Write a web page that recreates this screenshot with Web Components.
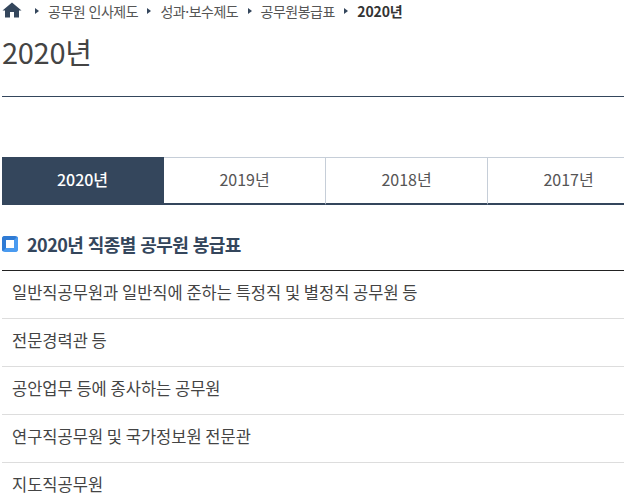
<!DOCTYPE html>
<html lang="ko"><head><meta charset="utf-8"><style>
html,body{margin:0;padding:0;height:494px;overflow:hidden;background:#fff}
body{font-family:"Noto Sans CJK KR","Noto Sans",sans-serif;color:#333;letter-spacing:-0.5px}
</style></head><body>
<pay-page>
<bread-crumbs slot="crumbs"><span>공무원 인사제도</span><span>성과·보수제도</span><span>공무원봉급표</span><span class="cur">2020년</span></bread-crumbs>
<year-tabs><year-tab active>2020년</year-tab><year-tab>2019년</year-tab><year-tab>2018년</year-tab><year-tab>2017년</year-tab></year-tabs>
<section-title>2020년 직종별 공무원 봉급표</section-title>
<link-list><link-row>일반직공무원과 일반직에 준하는 특정직 및 별정직 공무원 등</link-row><link-row>전문경력관 등</link-row><link-row>공안업무 등에 종사하는 공무원</link-row><link-row>연구직공무원 및 국가정보원 전문관</link-row><link-row>지도직공무원</link-row></link-list>
</pay-page>
<script>
function def(name,html){customElements.define(name,class extends HTMLElement{constructor(){super();this.attachShadow({mode:'open'}).innerHTML=html}})}
def('pay-page',`<style>:host{display:block;padding-left:2px;width:624px;box-sizing:border-box}
h1{margin:0;font-size:29px;font-weight:400;line-height:40px;height:65px;padding-top:9px;color:#444;letter-spacing:-.3px}
.top{height:22px}.rule{height:1px;background:#34465c;margin-bottom:60px}
</style><div class="top"><slot name="crumbs"></slot></div><h1>2020년</h1><div class="rule"></div><slot></slot>`);
def('bread-crumbs',`<style>:host{display:flex;align-items:center;height:22px;font-size:14px;color:#555}
svg{display:block;flex:none;margin-top:-2px}.home{margin-right:13px}
::slotted(span){display:flex;align-items:center;margin-right:9.4px}
::slotted(span)::before{content:"";width:0;height:0;border-left:4px solid #34465c;border-top:3px solid transparent;border-bottom:3px solid transparent;margin-right:9px}
::slotted(.cur){font-weight:700;color:#333;margin:0;letter-spacing:-.1px}
</style><svg class="home" width="20" height="16" viewBox="0 0 20 16"><path fill="#34465c" d="M10 .5 L19.5 8.5 L17 8.5 L17 15.5 L12 15.5 L12 10 L8 10 L8 15.5 L3 15.5 L3 8.5 L.5 8.5 Z"/></svg><slot></slot>`);
def('year-tabs',`<style>:host{display:flex;width:648px;height:48px;box-sizing:border-box}</style><slot></slot>`);
customElements.define('year-tab',class extends HTMLElement{constructor(){super();this.attachShadow({mode:'open'}).innerHTML=`<style>:host{display:flex;align-items:center;justify-content:center;flex:0 0 162px;box-sizing:border-box;height:48px;padding-bottom:4px;font-size:16px;color:#555;border:1px solid #c6ced8;border-left:0;border-bottom:2px solid #34465c;letter-spacing:0}
:host([active]){background:#34465c;color:#fff;border-color:#34465c;font-weight:500}</style><slot></slot>`}});
def('section-title',`<style>:host{display:flex;align-items:center;gap:9px;height:66px;box-sizing:border-box;padding-top:13px;border-bottom:1px solid #222;font-size:18px;font-weight:700;color:#34465c;letter-spacing:-.55px}
i{display:block;width:16px;height:16px;box-sizing:border-box;border:4px solid;border-color:#2f7bd4 #4a9bf0 #4a9bf0 #2f7bd4;border-radius:3px;background:#fff}</style><i></i><slot></slot>`);
def('link-list',`<style>:host{display:block}</style><slot></slot>`);
def('link-row',`<style>:host{display:flex;align-items:center;height:48px;box-sizing:border-box;padding:0 0 5px 10px;border-bottom:1px solid #ddd;font-size:16.5px;color:#444;letter-spacing:0;word-spacing:-.9px}</style><slot></slot>`);
</script></body></html>
